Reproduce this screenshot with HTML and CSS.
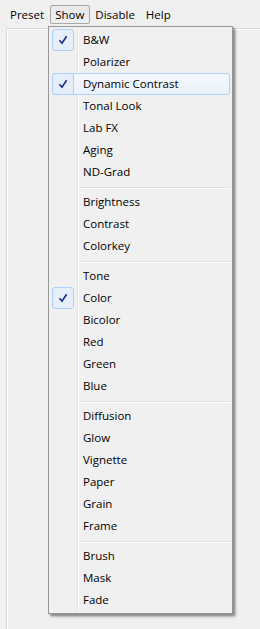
FILE: index.html
```html
<!DOCTYPE html>
<html lang="en">
<head>
    <meta charset="UTF-8">
    <meta name="viewport" content="width=device-width, initial-scale=1.0">
    <title>Show menu</title>
    <link rel="stylesheet" href="styles.css">
</head>
<body>
    <nav class="menubar">
        <span class="bar-item">Preset</span>
        <span class="bar-item open">Show</span>
        <span class="bar-item">Disable</span>
        <span class="bar-item">Help</span>
    </nav>

    <div class="panel"></div>

    <!-- dropdown of the Show menu -->
    <div class="dropdown">
        <ul class="menu-list">
            <li class="item checked"><span class="check"><svg width="10" height="10" viewBox="0 0 10 10"><path d="M1.5 5.2 L4 8.2 L8.6 1.2" /></svg></span>B&amp;W</li>
            <li class="item">Polarizer</li>
            <li class="item checked active"><span class="check"><svg width="10" height="10" viewBox="0 0 10 10"><path d="M1.5 5.2 L4 8.2 L8.6 1.2" /></svg></span>Dynamic Contrast</li>
            <li class="item">Tonal Look</li>
            <li class="item">Lab FX</li>
            <li class="item">Aging</li>
            <li class="item">ND-Grad</li>
            <li class="sep"></li>
            <li class="item">Brightness</li>
            <li class="item">Contrast</li>
            <li class="item">Colorkey</li>
            <li class="sep"></li>
            <li class="item">Tone</li>
            <li class="item checked"><span class="check"><svg width="10" height="10" viewBox="0 0 10 10"><path d="M1.5 5.2 L4 8.2 L8.6 1.2" /></svg></span>Color</li>
            <li class="item">Bicolor</li>
            <li class="item">Red</li>
            <li class="item">Green</li>
            <li class="item">Blue</li>
            <li class="sep"></li>
            <li class="item">Diffusion</li>
            <li class="item">Glow</li>
            <li class="item">Vignette</li>
            <li class="item">Paper</li>
            <li class="item">Grain</li>
            <li class="item">Frame</li>
            <li class="sep"></li>
            <li class="item">Brush</li>
            <li class="item">Mask</li>
            <li class="item">Fade</li>
        </ul>
    </div>
</body>
</html>
```

FILE: styles.css
```css
body {
    font-family: "Open Sans", "Noto Sans", sans-serif;
    font-size: 11.5px;
    color: #000;
    background-color: #f0f0f0;
    margin: 0;
    padding: 0;
    height: 629px;
    overflow: hidden;
}

.menubar {
    display: flex;
    height: 28px;
    padding: 5px 0 0 5px;
    box-sizing: border-box;
}

.bar-item {
    height: 19px;
    line-height: 18px;
    padding: 0 5px 0 4px;
    box-sizing: border-box;
    border: 1px solid transparent;
    border-radius: 2px;
}

.bar-item.open {
    border-color: #a8a8a8;
    background: linear-gradient(#e8e8e8, #f0f0f0);
}

.panel {
    margin-left: 6px;
    height: 601px;
    border-top: 1px solid #d9d9d9;
    border-left: 1px solid #d9d9d9;
    box-shadow: inset 1px 1px 0 #fff;
}

.dropdown {
    position: absolute;
    left: 48px;
    top: 26px;
    width: 185px;
    box-sizing: border-box;
    border: 1px solid #979797;
    background-color: #f0f0f0;
    padding: 2px;
    box-shadow: 2px 2px 2px rgba(0, 0, 0, 0.35), 3px 3px 3px rgba(0, 0, 0, 0.15);
}

.menu-list {
    list-style: none;
    margin: 0;
    padding: 0;
    background: linear-gradient(to right, transparent 26px, #e2e3e3 26px, #e2e3e3 27px, #fff 27px, #fff 28px, transparent 28px);
}

.item {
    position: relative;
    height: 22px;
    line-height: 21px;
    padding-left: 32px;
    box-sizing: border-box;
    white-space: nowrap;
}

.item.active {
    margin-left: 1px;
    padding-left: 30px;
    border: 1px solid #b3d3f5;
    border-radius: 3px;
    line-height: 19px;
    background: linear-gradient(#f4f8fd, #e9f1fb);
}

.check {
    position: absolute;
    left: 1px;
    top: 0;
    width: 22px;
    height: 22px;
    box-sizing: border-box;
    border: 1px solid #aecff7;
    border-radius: 3px;
    background-color: #e6eefa;
    display: flex;
    align-items: center;
    justify-content: center;
}

.item.active .check {
    left: -1px;
    top: -1px;
}

.check svg path {
    fill: none;
    stroke: #1b2a8c;
    stroke-width: 1.6;
}

.sep {
    height: 8px;
    margin-left: 28px;
    box-sizing: border-box;
    padding-top: 4px;
}

.sep::before {
    content: "";
    display: block;
    border-top: 1px solid #e0e0e0;
    border-bottom: 1px solid #fff;
}
```
